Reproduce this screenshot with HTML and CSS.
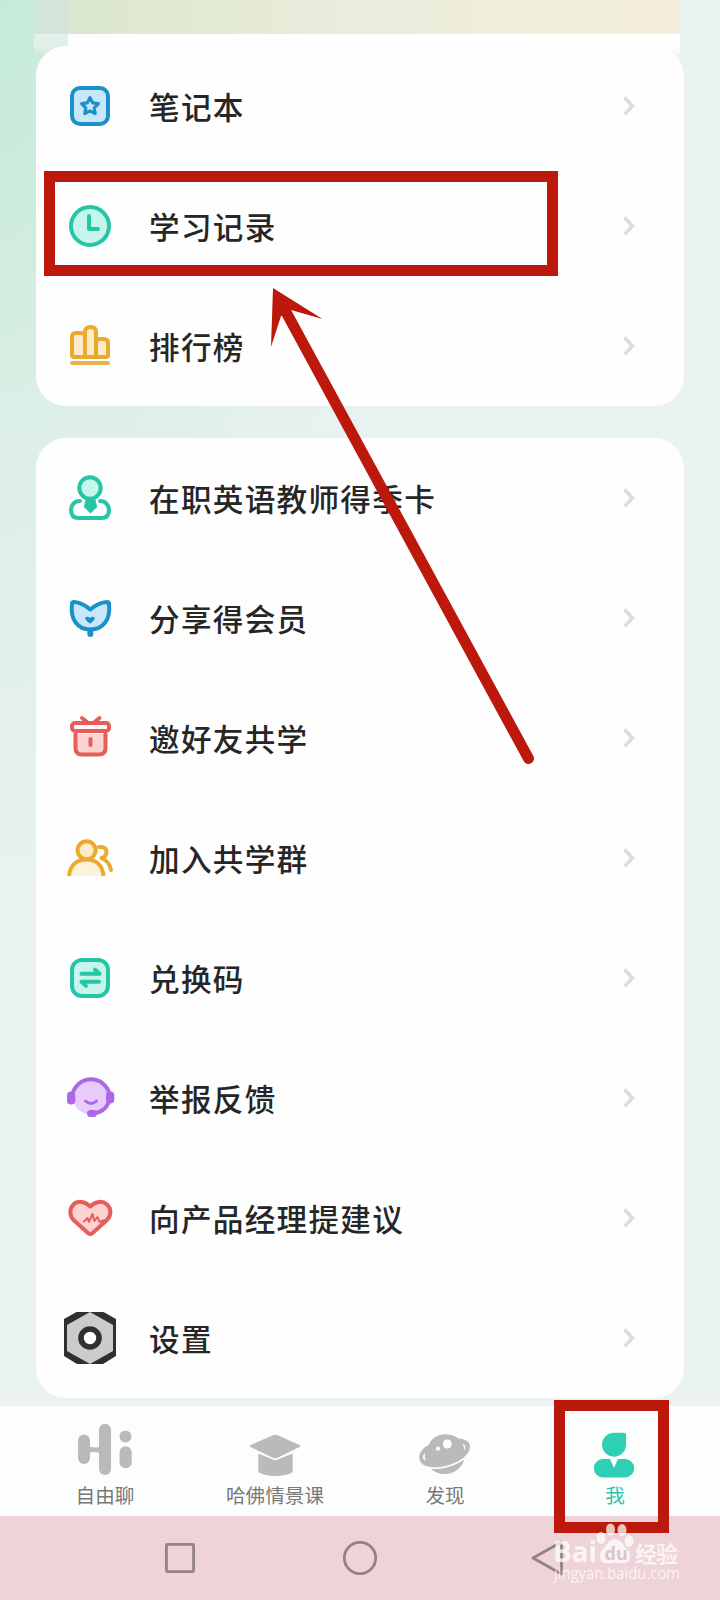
FILE: index.html
```html
<!DOCTYPE html>
<html lang="zh-CN">
<head>
<meta charset="utf-8">
<title>我</title>
<link rel="stylesheet" href="styles.css">
</head>
<body>
<div class="screen">
  <div class="banner"></div>
  <div class="banner-edge"></div>
  <main class="content">
    <section class="card">
      <div class="row">
        <svg class="icon blue" viewBox="0 0 52 52"><rect x="8" y="8" width="36" height="36" rx="8"/><path class="thin" d="M26 17.600l2.600 5.200 5.800.9-4.200 4.100 1 5.800-5.200-2.700-5.200 2.700 1-5.800-4.200-4.100 5.800-.9z"/></svg>
        <span class="label">笔记本</span>
        <svg class="chevron" viewBox="0 0 12 24"><path d="M1.500 3.500L9.500 12L1.500 20.500"/></svg>
      </div>
      <div class="row">
        <svg class="icon green" viewBox="0 0 52 52"><circle cx="26" cy="26" r="19"/><path class="line" d="M25 16v13h9"/></svg>
        <span class="label">学习记录</span>
        <svg class="chevron" viewBox="0 0 12 24"><path d="M1.500 3.500L9.500 12L1.500 20.500"/></svg>
      </div>
      <div class="row">
        <svg class="icon gold" viewBox="0 0 52 52"><path d="M21 37H10q-2 0-2-2V17q0-4 4-4h5q4 0 4 4zM32 37V23q0-4 4-4h4q4 0 4 4v12q0 2-2 2zM21 37V12q0-5 5.500-5t5.500 5v25z"/><path class="base" d="M8 43h36"/></svg>
        <span class="label">排行榜</span>
        <svg class="chevron" viewBox="0 0 12 24"><path d="M1.500 3.500L9.500 12L1.500 20.500"/></svg>
      </div>
    </section>
    <section class="card">
      <div class="row">
        <svg class="icon green" viewBox="0 0 52 52"><circle cx="26" cy="16" r="10.700"/><path class="line" d="M16 29C10 29 7 33.500 7 38q0 8 8 8h22q8 0 8-8c0-4.500-3-9-9-9"/><path class="solid" d="M22 26h9l2.200 9-6.700 6.500-6.700-6.500z"/></svg>
        <span class="label">在职英语教师得季卡</span>
        <svg class="chevron" viewBox="0 0 12 24"><path d="M1.500 3.500L9.500 12L1.500 20.500"/></svg>
      </div>
      <div class="row">
        <svg class="icon blue" viewBox="0 0 52 52"><path d="M26.300 17.500Q18 10.500 10 10q-2 0-2 2C6 28 14 37.500 26.300 37.500S47 28 45 12q0-2-2-2-8.500.5-16.700 7.500z"/><path class="stem" d="M26.300 39v3"/><path class="solid" d="M26 31.800l-4-3.600c-2.200-2.200 1-5 4-2.200 3-2.800 6.300 0 4 2.200z"/></svg>
        <span class="label">分享得会员</span>
        <svg class="chevron" viewBox="0 0 12 24"><path d="M1.500 3.500L9.500 12L1.500 20.500"/></svg>
      </div>
      <div class="row">
        <svg class="icon red" viewBox="0 0 52 52"><path d="M11.500 22v14q0 6.500 6.500 6.500h17q6.500 0 6.500-6.500V22"/><path class="line" d="M18 6l5 4M35.500 6l-5 4M26.500 27v6"/><rect class="lid" x="8" y="11" width="37" height="8" rx="3"/></svg>
        <span class="label">邀好友共学</span>
        <svg class="chevron" viewBox="0 0 12 24"><path d="M1.500 3.500L9.500 12L1.500 20.500"/></svg>
      </div>
      <div class="row">
        <svg class="icon gold" viewBox="0 0 52 52"><path class="fade" d="M5 44C6 33 13 27.500 22.500 27.500S38.500 33 39.500 44"/><circle cx="22.600" cy="18.300" r="9"/><path class="line" d="M35 15c4.500-.5 7.500 1.500 7.500 5 0 3-2 5-5 6 5 2 8.500 6 9.500 12"/></svg>
        <span class="label">加入共学群</span>
        <svg class="chevron" viewBox="0 0 12 24"><path d="M1.500 3.500L9.500 12L1.500 20.500"/></svg>
      </div>
      <div class="row">
        <svg class="icon green" viewBox="0 0 52 52"><rect x="8" y="8" width="36" height="36" rx="10"/><path class="line" d="M17.500 21.700h18l-4.500-4M35 29.700H17.500l4.500 4.200"/></svg>
        <span class="label">兑换码</span>
        <svg class="chevron" viewBox="0 0 12 24"><path d="M1.500 3.500L9.500 12L1.500 20.500"/></svg>
      </div>
      <div class="row">
        <svg class="icon purple" viewBox="0 0 52 52"><circle class="face" cx="27" cy="24.500" r="18"/><path class="line" d="M8.500 22A19 19 0 0 1 45.500 22M45 29C43 36 37 40.500 29 41.500"/><rect class="solid" x="3" y="19.500" width="8.300" height="13" rx="4"/><rect class="solid" x="42" y="19.500" width="8.300" height="12" rx="4"/><rect class="solid" x="23" y="38" width="10" height="7" rx="3.500"/><path class="line smile" d="M21.500 29q5.500 5 11 0"/></svg>
        <span class="label">举报反馈</span>
        <svg class="chevron" viewBox="0 0 12 24"><path d="M1.500 3.500L9.500 12L1.500 20.500"/></svg>
      </div>
      <div class="row">
        <svg class="icon red" viewBox="0 0 52 52"><path d="M26.300 14.500C21 9 13.500 8.500 9.500 12.500S5 23 9.500 28L24 41q2.300 2 4.600 0L43 28c4.500-5 4.500-11.500 0-15.500S31.600 9 26.300 14.500z"/><path class="pulse" d="M20 29.500l3.500-3.500 1.500 4 3.500-8 2 7 3-4 2 5 5-2"/></svg>
        <span class="label">向产品经理提建议</span>
        <svg class="chevron" viewBox="0 0 12 24"><path d="M1.500 3.500L9.500 12L1.500 20.500"/></svg>
      </div>
      <div class="row">
        <svg class="icon" viewBox="0 0 52 52"><path fill="#303030" d="M0 7L12.500 0h27L52 7v37l-13 8H13L0 44z"/><path fill="#cbcbcb" d="M26 0l23 13v26L26 52 3 39V13z"/><circle cx="26" cy="26" r="9" fill="#fff" stroke="#303030" stroke-width="5.600"/></svg>
        <span class="label">设置</span>
        <svg class="chevron" viewBox="0 0 12 24"><path d="M1.500 3.500L9.500 12L1.500 20.500"/></svg>
      </div>
    </section>
  </main>
  <nav class="tabs">
    <div class="tab">
      <svg class="tab-icon" viewBox="0 0 60 60"><rect x="3" y="14.500" width="12" height="29.500" rx="6"/><rect x="24" y="3.700" width="12" height="51.300" rx="6"/><path d="M14 26.500q6 1.500 11 .5v6q-5-1.500-11-.5z"/><circle cx="50.500" cy="16.500" r="6"/><rect x="44.500" y="26.300" width="12.200" height="22" rx="6"/></svg>
      <span>自由聊</span>
    </div>
    <div class="tab">
      <svg class="tab-icon" viewBox="0 0 60 60"><path d="M13.300 33.500L30.300 40.500 47.700 33.500V52Q42 56 30.500 56T13.300 52z"/><path d="M5.500 25L28 15.300q2.300-1 4.600 0L54.500 25q2 1 0 2L32.600 37.800q-2.300 1-4.600 0L5.500 27q-2-1 0-2z" stroke="#fcfefd" stroke-width="1.500" paint-order="stroke"/></svg>
      <span>哈佛情景课</span>
    </div>
    <div class="tab">
      <svg class="tab-icon" viewBox="0 0 60 60"><path d="M16 49C28 49.500 40 46 49.300 39.500 47 48 39 54 30 54 24 54 19.500 52 16 49z"/><path d="M13.500 25C17 17.500 23 14 31 14.200c5 .2 9 2 12.500 4.300 7 .5 11 3 11.500 7.500C55.500 34 46 42 31 46 17 49 5.500 47 4.200 38.500 3.500 33 8 28 13.500 25z"/><g fill="#fcfefd"><circle cx="32.300" cy="24" r="4.500"/><circle cx="23" cy="28.700" r="2.100"/><path d="M10 33c-3 3-2.500 6 .5 8-.8-2.500-.7-5-.5-8zM47.500 23.500c3.200 1.500 3.500 4 1.800 7-.2-3-.6-5-1.800-7z"/></g></svg>
      <span>发现</span>
    </div>
    <div class="tab active">
      <svg class="tab-icon" viewBox="0 0 60 60"><path d="M29 12.700h10q2 0 2 2V25a12 12 0 1 1-12-12.300zM18 39h7l4 9 4-9h7a9.200 9.200 0 0 1 0 18.400H18A9.200 9.200 0 0 1 18 39z"/></svg>
      <span>我</span>
    </div>
  </nav>
  <div class="system-nav">
    <svg viewBox="0 0 60 60"><rect x="16.400" y="16.400" width="27.200" height="27.200" rx="1"/></svg>
    <svg viewBox="0 0 60 60"><circle cx="30" cy="30" r="15.700"/></svg>
    <svg viewBox="0 0 60 60"><path d="M23 30L51.500 14v32z"/></svg>
  </div>

  <div class="mark mark-row"></div>
  <div class="mark mark-tab"></div>
  <svg class="arrow" viewBox="0 0 720 1600"><path d="M286 312L528.500 758.500" stroke="#bd180c" stroke-width="11" stroke-linecap="round"/><path fill="#bd180c" d="M273 288L322.500 319 291 310 281 316 271 347z"/></svg>
  <svg class="watermark" viewBox="0 0 150 80">
    <g class="wm-text">
      <text x="13" y="42" font-size="28" font-weight="700" textLength="44" lengthAdjust="spacingAndGlyphs">Bai</text>
      <ellipse cx="61" cy="18" rx="4.500" ry="6"/><ellipse cx="70.500" cy="9.500" rx="4.500" ry="6"/><ellipse cx="82" cy="10" rx="4.500" ry="6"/><ellipse cx="89" cy="21" rx="4.500" ry="6"/>
      <path d="M75 19c5 0 7 4 10 8 4 4 6 7 5 11-1 5-6 6-10 5-4-.7-6-.7-10 0-4 1-9 0-10-5-1-4 1-7 5-11 3-4 5-8 10-8z"/>
      <text x="95" y="42" font-size="22" font-weight="700" textLength="43">经验</text>
      <text x="14" y="59" font-size="16" textLength="126" lengthAdjust="spacingAndGlyphs">jingyan.baidu.com</text>
    </g>
    <text class="wm-du" x="64.500" y="40" font-size="18" font-weight="700">du</text>
  </svg>
</div>
</body>
</html>
```
FILE: styles.css
```css
* { box-sizing: border-box; }

body {
  margin: 0;
  font-family: "Noto Sans CJK SC", sans-serif;
}

.screen {
  position: relative;
  width: 720px;
  height: 1600px;
  overflow: hidden;
  display: flex;
  flex-direction: column;
  background:
    radial-gradient(ellipse 420px 1000px at 0 0, #c5ebd8 0, #cdecdc 20%, rgba(216, 238, 227, .75) 45%, rgba(234, 243, 242, 0) 100%),
    #ebf2f2;
}

.banner {
  flex: none;
  height: 34px;
  margin: 0 40px 0 34px;
  background: linear-gradient(90deg, #d2e5d8 0 34px, #dae6cf 34px, #e3ead5 180px, #eaeddc 330px, #f0eedd 460px, #f1edd8 600px, #f4eddb);
}

.banner-edge {
  flex: none;
  height: 20px;
  margin: 0 40px -8px 34px;
  background:
    linear-gradient(180deg, #e3f1ea, #e0f0e8 60%, #d0ecde) 0 0 / 34px 100% no-repeat,
    linear-gradient(180deg, #fff 50%, #f5f8f7) 34px 0 no-repeat;
}

.content {
  flex: none;
  display: flex;
  flex-direction: column;
  gap: 32px;
  padding: 0 36px;
  height: 1360px;
}

.card {
  flex: none;
  background: #fefefe;
  border-radius: 30px;
}

.row {
  height: 120px;
  display: flex;
  align-items: center;
  padding: 0 49px 0 28px;
}

.icon {
  flex: none;
  width: 52px;
  height: 52px;
  fill: var(--tint);
  stroke: var(--ink);
  stroke-width: 4;
  stroke-linecap: round;
  stroke-linejoin: round;
}

.icon path[fill] { stroke: none; }
.blue { --ink: #1b91c9; --tint: #c9e7fa; }
.green { --ink: #26c5a6; --tint: #c6f6eb; }
.gold { --ink: #ebaa2c; --tint: #fdecca; }
.red { --ink: #e45f5c; --tint: #fdd3d2; }
.purple { --ink: #ac68e4; --tint: #e7cbfa; }
.icon .line { fill: none; }
.icon .thin { fill: none; stroke-width: 3.2; }
.icon .solid { fill: var(--ink); stroke: none; }
.icon .stem { stroke-width: 6; }
.icon .lid { fill: #fff6f5; }
.icon .face { stroke: none; }
.icon .smile { stroke-width: 3; }
.icon .fade { fill: #fdf2dc; stroke-linecap: butt; }
.icon .base { stroke: #e5b552; }
.icon .pulse { fill: none; stroke-width: 2; }

.label {
  flex: 1;
  margin-left: 33px;
  font-size: 30.6px;
  letter-spacing: 1.3px;
  line-height: 48px;
  font-weight: 500;
  color: #262626;
  white-space: nowrap;
}

.chevron {
  flex: none;
  width: 12px;
  height: 24px;
  fill: none;
  stroke: #dedede;
  stroke-width: 3.8;
}

.tabs {
  flex: none;
  height: 110px;
  padding: 14px 20px 0;
  display: grid;
  grid-template-columns: repeat(4, 1fr);
  background: #fcfefd;
}

.tab {
  display: flex;
  flex-direction: column;
  align-items: center;
  font-size: 19.6px;
  line-height: 30px;
  color: #787878;
}

.tab-icon {
  width: 60px;
  height: 60px;
  fill: #bababa;
}

.active { color: #2fc4a9; }
.active .tab-icon { fill: #2ecfb5; }

.system-nav {
  flex: none;
  height: 84px;
  padding: 0 90px;
  display: grid;
  grid-template-columns: repeat(3, 1fr);
  place-items: center;
  background: #eed3d8;
}

.system-nav svg {
  width: 60px;
  height: 60px;
  fill: none;
  stroke: #918386;
  stroke-width: 2.8;
  stroke-linejoin: round;
}

.mark {
  position: absolute;
  border: 11px solid #bd180c;
}

.mark-row { left: 44px; top: 171px; width: 514px; height: 105px; }
.mark-tab { left: 554px; top: 1400px; width: 115px; height: 133px; }

.arrow {
  position: absolute;
  inset: 0;
  width: 720px;
  height: 1600px;
}

.watermark {
  position: absolute;
  left: 540px;
  top: 1520px;
  width: 150px;
  height: 80px;
  font-family: "Open Sans", "Noto Sans CJK SC", sans-serif;
}

.wm-text { fill: #fff; opacity: .75; }
.wm-du { fill: #dfc3c8; }
```
